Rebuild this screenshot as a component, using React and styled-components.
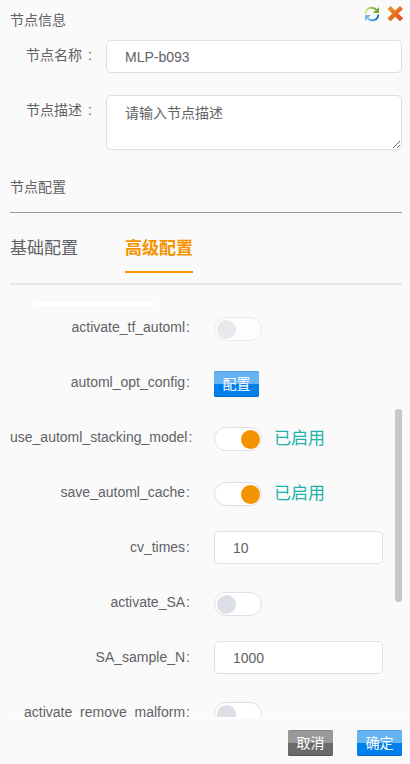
import React, { useState } from 'react';
import styled, { createGlobalStyle, css } from 'styled-components';

const GlobalStyle = createGlobalStyle`
  * { box-sizing: border-box; }
  body {
    margin: 0;
    background: #fafafa;
    color: #606266;
    font-family: "Liberation Sans", "Noto Sans CJK SC", sans-serif;
    font-size: 14px;
    line-height: 20px;
  }
  input, textarea, button { font: inherit; color: inherit; }
`;

const Panel = styled.main`
  display: flex;
  flex-direction: column;
  height: 100vh;
  padding: 0 8px 0 10px;
`;

const Header = styled.header`
  display: flex;
  align-items: flex-start;
  justify-content: space-between;
  height: 40px;
  padding-top: 5px;
`;

const Title = styled.h2`
  margin: 0;
  padding-top: 5px;
  font-size: 14px;
  font-weight: 400;
`;

const Tools = styled.div`
  display: flex;
  gap: 6px;
`;

const IconButton = styled.button`
  display: flex;
  padding: 0;
  border: 0;
  background: none;
  cursor: pointer;
`;

const Field = styled.div`
  display: grid;
  grid-template-columns: 82px 1fr;
  column-gap: 14px;
  margin-bottom: 22px;
`;

const FieldLabel = styled.label`
  padding-top: 5px;
  text-align: right;
  white-space: nowrap;
`;

const Colon = styled.span`
  margin-left: ${(p) => (p.$wide ? 6 : 1)}px;
`;

const boxed = css`
  display: block;
  width: 100%;
  border: 1px solid #dcdfe6;
  border-radius: 5px;
  background: #fff;
  outline: none;
  &:focus { border-color: #f49300; }
`;

const TextInput = styled.input`
  ${boxed}
  height: 33px;
  padding: 0 18px;
`;

const TextArea = styled.textarea`
  ${boxed}
  height: 55px;
  padding: 7px 18px;
  resize: vertical;
  &::placeholder { color: #606266; }
`;

const SectionTitle = styled(Title)`
  padding: 5px 0 15px;
  border-bottom: 1px solid #999;
`;

const Tabs = styled.div`
  display: flex;
  gap: 47px;
  height: 72px;
  padding-top: 23px;
  border-bottom: 2px solid #e4e7ed;
`;

const Tab = styled.button`
  height: 37px;
  padding: 1px 0 10px;
  border: 0;
  border-bottom: 2px solid ${(p) => (p.$active ? '#f49300' : 'transparent')};
  background: none;
  color: ${(p) => (p.$active ? '#f49300' : '#606266')};
  font-size: 17px;
  font-weight: ${(p) => (p.$active ? 700 : 400)};
  line-height: 24px;
  cursor: pointer;
`;

const ScrollArea = styled.section`
  position: relative;
  flex: 1;
  min-height: 0;
  margin-top: 17px;
  overflow: hidden;
  border-bottom: 1px solid #fff;
`;

const ClippedField = styled.div`
  width: 122px;
  height: 4px;
  margin: 0 0 5px 24px;
  border-radius: 0 0 5px 5px;
  background: #fff;
`;

const Options = styled.div`
  display: grid;
  gap: 22px;
  padding-right: 19px;
`;

const Option = styled.div`
  display: grid;
  grid-template-columns: 180px 1fr;
  column-gap: 24px;
  align-items: start;
  height: 33px;
`;

const OptionLabel = styled.label`
  line-height: 32px;
  text-align: right;
  white-space: nowrap;
`;

const Control = styled.div`
  display: flex;
  align-items: center;
  gap: 12px;
  height: ${(p) => (p.$kind === 'text' ? 33 : 36)}px;
`;

const Switch = styled.input`
  appearance: none;
  display: flex;
  align-items: center;
  width: 48px;
  height: 24px;
  margin: 0;
  padding: 0 2px;
  border: 1px solid #dcdfe6;
  border-radius: 12px;
  background: #fff;
  cursor: pointer;
  &::before {
    content: "";
    width: 19px;
    height: 19px;
    border-radius: 50%;
    background: #dcdfe6;
  }
  &:checked { justify-content: flex-end; padding-right: 1px; }
  &:checked::before { background: #f49300; }
  &:disabled { opacity: 0.6; cursor: default; }
`;

const Status = styled.span`
  color: #20b2aa;
  font-size: 17px;
  line-height: 24px;
`;

const tones = {
  blue: ['#66b3f4', '#0080ec', '#0068c0', '#4a9fe6'],
  gray: ['#999', '#6a6a6a', '#555', '#888'],
};

const Button = styled.button`
  width: 45px;
  height: 26px;
  padding: 0;
  border: 0;
  border-radius: 2px;
  background: linear-gradient(
    ${(p) => tones[p.$tone][0]} 50%,
    ${(p) => tones[p.$tone][1]} 50%
  );
  box-shadow:
    inset 0 -1px ${(p) => tones[p.$tone][2]},
    inset 0 1px ${(p) => tones[p.$tone][3]};
  color: #fff;
  line-height: 24px;
  cursor: pointer;
`;

const ScrollThumb = styled.div`
  position: absolute;
  top: 107px;
  right: 0;
  width: 7px;
  height: 193px;
  border-radius: 3px;
  background: #c8c8c8;
`;

const Footer = styled.footer`
  display: flex;
  justify-content: flex-end;
  gap: 24px;
  padding: 12px 0 8px;
`;

const RefreshIcon = () => (
  <svg width="18" height="18" viewBox="0 0 18 18" aria-hidden="true">
    <defs>
      <linearGradient id="green"><stop stopColor="#d2e87c" /><stop offset="1" stopColor="#6d9f27" /></linearGradient>
      <linearGradient id="blue"><stop stopColor="#78bdf2" /><stop offset="1" stopColor="#1772c4" /></linearGradient>
    </defs>
    <path d="M3.8 8.4C3.8 2 11.4 1.2 14.4 5" fill="none" stroke="url(#green)" strokeWidth="2" />
    <path d="M17 2v6h-6z" fill="#7ba52d" />
    <path d="M16.2 9.6C16.2 16 8.6 16.8 5.6 13" fill="none" stroke="url(#blue)" strokeWidth="2" />
    <path d="M3 16v-6h6z" fill="#70b7ee" />
  </svg>
);

const CloseIcon = () => (
  <svg width="16" height="18" viewBox="0 0 16 18" overflow="visible" aria-hidden="true">
    <defs>
      <linearGradient id="fire" x1="0" y1="0" x2="1" y2="1">
        <stop stopColor="#e9a21c" /><stop offset="1" stopColor="#e53c20" />
      </linearGradient>
    </defs>
    <path d="M4.5 1 9.2 5.6 14 1 17 4 12.3 8.6 17 13.2 14 16.3 9.2 11.7 4.5 16.3 1.5 13.2 6.2 8.6 1.5 4z" fill="url(#fire)" />
  </svg>
);

const options = [
  { name: 'activate_tf_automl', kind: 'switch', disabled: true },
  { name: 'automl_opt_config', kind: 'button' },
  { name: 'use_automl_stacking_model', kind: 'switch', on: true },
  { name: 'save_automl_cache', kind: 'switch', on: true },
  { name: 'cv_times', kind: 'text', value: '10' },
  { name: 'activate_SA', kind: 'switch' },
  { name: 'SA_sample_N', kind: 'text', value: '1000' },
  { name: 'activate_remove_malform', kind: 'switch' },
];

function OptionRow({ name, kind, on = false, disabled, value }) {
  const [checked, setChecked] = useState(on);
  return (
    <Option>
      <OptionLabel htmlFor={name}>{name}<Colon>:</Colon></OptionLabel>
      <Control $kind={kind}>
        {kind === 'switch' && (
          <Switch id={name} type="checkbox" role="switch" checked={checked} disabled={disabled}
            onChange={(e) => setChecked(e.target.checked)} />
        )}
        {kind === 'switch' && checked && <Status>已启用</Status>}
        {kind === 'button' && <Button id={name} type="button" $tone="blue">配置</Button>}
        {kind === 'text' && <TextInput id={name} defaultValue={value} />}
      </Control>
    </Option>
  );
}

export default function App() {
  const [tab, setTab] = useState('高级配置');
  return (
    <>
      <GlobalStyle />
      <Panel>
        <Header>
          <Title>节点信息</Title>
          <Tools>
            <IconButton type="button" aria-label="刷新"><RefreshIcon /></IconButton>
            <IconButton type="button" aria-label="关闭"><CloseIcon /></IconButton>
          </Tools>
        </Header>
        <Field>
          <FieldLabel htmlFor="node-name">节点名称<Colon $wide>:</Colon></FieldLabel>
          <TextInput id="node-name" defaultValue="MLP-b093" />
        </Field>
        <Field>
          <FieldLabel htmlFor="node-desc">节点描述<Colon $wide>:</Colon></FieldLabel>
          <TextArea id="node-desc" placeholder="请输入节点描述" />
        </Field>
        <SectionTitle>节点配置</SectionTitle>
        <Tabs role="tablist">
          {['基础配置', '高级配置'].map((t) => (
            <Tab key={t} type="button" role="tab" aria-selected={t === tab} $active={t === tab} onClick={() => setTab(t)}>
              {t}
            </Tab>
          ))}
        </Tabs>
        <ScrollArea>
          <ClippedField />
          <Options>
            {options.map((o) => <OptionRow key={o.name} {...o} />)}
          </Options>
          <ScrollThumb />
        </ScrollArea>
        <Footer>
          <Button type="button" $tone="gray">取消</Button>
          <Button type="button" $tone="blue">确定</Button>
        </Footer>
      </Panel>
    </>
  );
}
